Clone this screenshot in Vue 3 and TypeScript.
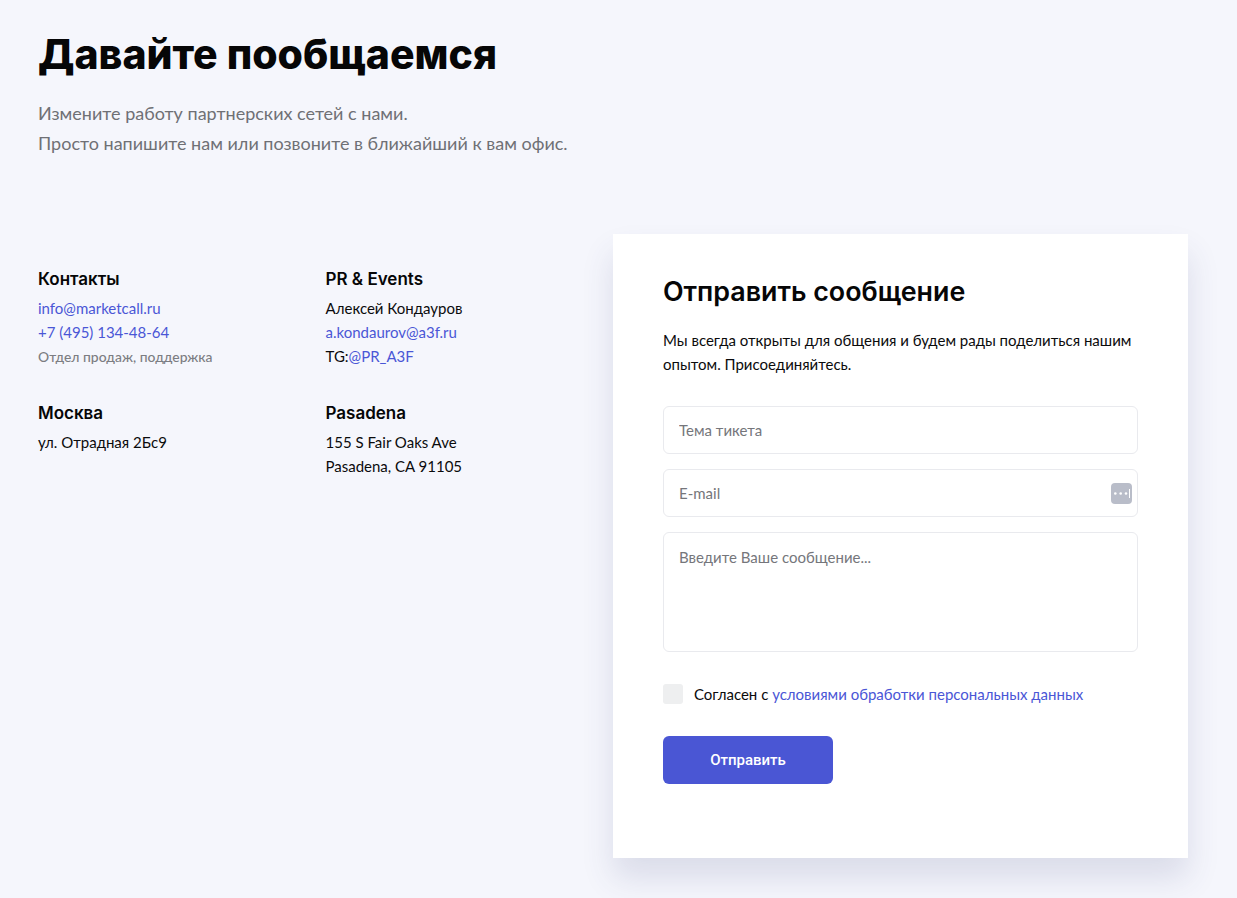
<script setup lang="ts">
const subject = 'Тема тикета'
</script>

<template>
  <div class="page">
    <header class="intro">
      <h1>Давайте пообщаемся</h1>
      <p>Измените работу партнерских сетей с нами.<br />Просто напишите нам или позвоните в ближайший к вам офис.</p>
    </header>

    <div class="content">
      <section class="info">
        <div class="block">
          <h3>Контакты</h3>
          <a href="#">info@marketcall.ru</a>
          <a href="#">+7 (495) 134-48-64</a>
          <small>Отдел продаж, поддержка</small>
        </div>
        <div class="block">
          <h3>PR &amp; Events</h3>
          <span>Алексей Кондауров</span>
          <a href="#">a.kondaurov@a3f.ru</a>
          <span>TG:<a href="#">@PR_A3F</a></span>
        </div>
        <div class="block">
          <h3>Москва</h3>
          <span>ул. Отрадная 2Бс9</span>
        </div>
        <div class="block">
          <h3>Pasadena</h3>
          <span>155 S Fair Oaks Ave</span>
          <span>Pasadena, CA 91105</span>
        </div>
      </section>

      <form class="card" @submit.prevent>
        <h2>Отправить сообщение</h2>
        <p class="lead">Мы всегда открыты для общения и будем рады поделиться нашим опытом. Присоединяйтесь.</p>
        <input class="field" type="text" :placeholder="subject" />
        <div class="email">
          <input class="field" type="text" placeholder="E-mail" />
          <span class="dots">
            <svg width="21" height="21" viewBox="0 0 21 21">
              <rect width="21" height="21" rx="4" fill="#b9bdc9" />
              <circle cx="4.3" cy="10.5" r="1.3" fill="#fff" />
              <circle cx="9.7" cy="10.5" r="1.3" fill="#fff" />
              <circle cx="15" cy="10.5" r="1.3" fill="#fff" />
              <rect x="18" y="6" width="1" height="9" fill="#fff" />
            </svg>
          </span>
        </div>
        <textarea class="field area" placeholder="Введите Ваше сообщение..."></textarea>
        <label class="agree">
          <span class="box"></span>
          <span>Согласен с <a href="#">условиями обработки персональных данных</a></span>
        </label>
        <button type="submit">Отправить</button>
      </form>
    </div>
  </div>
</template>

<style>
html,
body {
  margin: 0;
  background: #f5f6fc;
}
</style>

<style scoped>
.page {
  height: 898px;
  overflow: hidden;
  box-sizing: border-box;
  padding: 26px 49px 0 38px;
  font-family: Lato, 'Noto Sans', sans-serif;
  font-size: 15px;
  line-height: 24px;
  color: #0b0b0c;
}

h1,
h2,
h3 {
  margin: 0;
  font-family: Inter, 'Noto Sans', sans-serif;
  color: #060607;
}

h1 {
  font-size: 41px;
  line-height: 56px;
  font-weight: 800;
}

.intro p {
  margin: 16px 0 0;
  font-size: 18px;
  line-height: 30px;
  color: #6f7075;
}

.content {
  display: flex;
  margin-top: 76px;
}

.info {
  width: 575px;
  padding-top: 32px;
  display: grid;
  grid-template-columns: 287.5px 287.5px;
  grid-auto-rows: min-content;
  row-gap: 32px;
}

.block {
  display: flex;
  flex-direction: column;
  align-items: flex-start;
}

h3 {
  font-size: 17px;
  line-height: 26px;
  font-weight: 600;
  margin-bottom: 4px;
}

a {
  color: #4a56d6;
  text-decoration: none;
}

small {
  padding-top: 1px;
  margin-bottom: -1px;
  font-size: 13.9px;
  font-weight: 500;
  color: #7c7d82;
}

.card {
  width: 575px;
  height: 624px;
  box-sizing: border-box;
  padding: 38px 50px 0;
  background: #fff;
  box-shadow: 0 20px 30px rgba(60, 66, 120, 0.14);
}

h2 {
  font-size: 26.8px;
  line-height: 38px;
  font-weight: 600;
}

.lead {
  margin: 18px 0 30px;
}

.field {
  display: block;
  width: 100%;
  height: 48px;
  box-sizing: border-box;
  margin-bottom: 15px;
  padding: 0 15px;
  background: #fff;
  border: 1px solid #e9eaee;
  border-radius: 6px;
  outline: none;
  font: inherit;
  color: inherit;
}

.field::placeholder {
  color: #75767b;
  opacity: 1;
}

.email {
  position: relative;
}

.dots {
  position: absolute;
  top: 14px;
  right: 6px;
  height: 21px;
}

.area {
  height: 120px;
  padding-top: 12px;
  resize: none;
}

.agree {
  display: flex;
  align-items: center;
  gap: 11px;
  margin: 30px 0 30px;
}

.box {
  width: 20px;
  height: 20px;
  border-radius: 3px;
  background: #eeeff0;
}

button {
  display: block;
  width: 170px;
  height: 48px;
  border: 0;
  border-radius: 6px;
  background: #4a56d4;
  color: #fff;
  font-family: Roboto, 'Liberation Sans', sans-serif;
  font-size: 15px;
  font-weight: 500;
}
</style>
